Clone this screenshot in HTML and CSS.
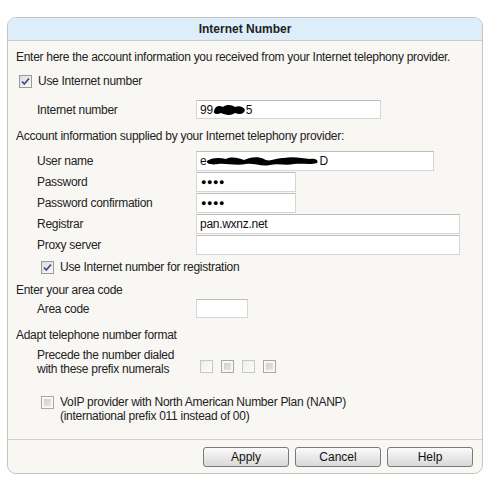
FILE: index.html
```html
<!DOCTYPE html>
<html>
<head>
<meta charset="utf-8">
<link rel="stylesheet" href="styles.css">
</head>
<body>
<div class="panel">
  <div class="head">Internet Number</div>
  <div class="content">
    <div class="line intro">Enter here the account information you received from your Internet telephony provider.</div>
    <div class="line chkrow top-chk"><span class="cb checked"><svg viewBox="0 0 13 13" width="13" height="13"><path d="M3 6.5 L5.3 9 L10 3.5" fill="none" stroke="#3c4f86" stroke-width="1.8"/></svg></span><span>Use Internet number</span></div>
    <div class="frow inet">
      <span class="lbl">Internet number</span>
      <div class="field w185"><span>99</span><svg class="blob" width="33" height="12" viewBox="0 0 33 12"><path d="M1 7 C2 2 6 1 10 3 C14 0 19 1 22 3 C26 1 31 3 32 6 C31 10 27 11 22 9 C18 12 12 11 8 9 C4 11 0 10 1 7 Z" fill="#000"/></svg><span>5</span></div>
    </div>
    <div class="line sect acct">Account information supplied by your Internet telephony provider:</div>
    <div class="fgroup">
      <div class="frow r21">
        <span class="lbl">User name</span>
        <div class="field w238"><span>e</span><svg class="blob" width="113" height="12" viewBox="0 0 113 12"><path d="M1 6 C5 3 12 2 20 4 C26 1 32 3 38 5 C44 2 52 1 58 4 C64 8 70 2 78 3 C86 1 96 3 104 4 C110 3 113 6 111 8 C104 10 96 8 88 9 C80 11 72 8 64 10 C56 12 48 8 40 9 C30 11 20 8 12 9 C6 10 0 9 1 6 Z" fill="#000"/></svg><span>D</span></div>
      </div>
      <div class="frow r21">
        <span class="lbl">Password</span>
        <div class="field w100"><span class="dots">●●●●</span></div>
      </div>
      <div class="frow r21">
        <span class="lbl">Password confirmation</span>
        <div class="field w100"><span class="dots">●●●●</span></div>
      </div>
      <div class="frow r21">
        <span class="lbl">Registrar</span>
        <div class="field w264">pan.wxnz.net</div>
      </div>
      <div class="frow r21">
        <span class="lbl">Proxy server</span>
        <div class="field w264"></div>
      </div>
    </div>
    <div class="line chkrow sub reg"><span class="cb checked"><svg viewBox="0 0 13 13" width="13" height="13"><path d="M3 6.5 L5.3 9 L10 3.5" fill="none" stroke="#3c4f86" stroke-width="1.8"/></svg></span><span>Use Internet number for registration</span></div>
    <div class="line sect area-h">Enter your area code</div>
    <div class="frow area">
      <span class="lbl">Area code</span>
      <div class="field w52"></div>
    </div>
    <div class="line sect adapt">Adapt telephone number format</div>
    <div class="frow prefix">
      <span class="lbl two">Precede the number dialed<br>with these prefix numerals</span>
      <div class="prefixes">
        <span class="cb light"></span>
        <span class="cb gray"></span>
        <span class="cb light"></span>
        <span class="cb gray"></span>
      </div>
    </div>
    <div class="chkrow sub nanp">
      <span class="cb gray big"></span>
      <span class="two">VoIP provider with North American Number Plan (NANP)<br>(international prefix 011 instead of 00)</span>
    </div>
  </div>
  <div class="foot">
    <button class="btn">Apply</button>
    <button class="btn">Cancel</button>
    <button class="btn">Help</button>
  </div>
</div>
</body>
</html>
```

FILE: styles.css
```css
html, body {
  margin: 0;
  padding: 0;
  background: #ffffff;
}
body {
  font-family: "Liberation Sans", Arial, sans-serif;
  font-size: 12px;
  color: #222;
}
.panel {
  margin: 17px 0 0 7px;
  width: 474px;
  border: 1px solid #c4c4c4;
  border-radius: 9px;
  background: #f8f7f3;
  overflow: hidden;
}
.head {
  height: 22px;
  line-height: 22px;
  background: #deedfa;
  border-bottom: 1px solid #c7ccd2;
  text-align: center;
  font-weight: bold;
  color: #222;
}
.content {
  padding: 7px 8px 0 8px;
  height: 391px;
  letter-spacing: -0.28px;
}
.line {
  height: 18px;
  line-height: 18px;
  white-space: nowrap;
}
.chkrow {
  display: flex;
  align-items: center;
  gap: 6px;
}
.top-chk {
  margin-top: 6px;
  padding-left: 3px;
}
.sub {
  padding-left: 25px;
}
.frow {
  display: flex;
  align-items: center;
}
.lbl {
  width: 159px;
  padding-left: 21px;
  flex: none;
}
.inet {
  margin-top: 10px;
  height: 19px;
}
.acct { margin-top: 8px; }
.fgroup {
  margin-top: 6px;
  display: flex;
  flex-direction: column;
  gap: 1px;
}
.r21 { height: 20px; }
.reg { margin-top: 3px; }
.area-h { margin-top: 5px; }
.area {
  height: 19px;
  margin-top: 0;
}
.adapt { margin-top: 8px; }
.prefix {
  margin-top: 4px;
  height: 28px;
  align-items: flex-end;
}
.two {
  line-height: 14px;
}
.prefixes {
  display: flex;
  gap: 8px;
  padding-left: 4px;
  padding-bottom: 3px;
}
.nanp {
  margin-top: 19px;
  align-items: flex-start;
  gap: 6px;
}
.nanp .cb { margin-top: 1px; }
.field {
  box-sizing: border-box;
  height: 19px;
  background: #fff;
  border: 1px solid #d6d6d6;
  border-top-color: #bdbdbd;
  padding-left: 3px;
  display: flex;
  align-items: center;
  color: #111;
  white-space: nowrap;
}
.r21 .field { height: 20px; }
.w185 { width: 185px; }
.w238 { width: 238px; }
.w100 { width: 100px; }
.w264 { width: 264px; }
.w52 { width: 52px; }
.blob { display: block; flex: none; }
.dots {
  font-size: 9px;
  letter-spacing: 0.6px;
  padding-left: 1px;
  color: #000;
}
.cb {
  box-sizing: border-box;
  width: 13px;
  height: 13px;
  flex: none;
  display: inline-block;
  border: 1px solid #9a9a9a;
  background: linear-gradient(135deg, #dcdcdc, #fafafa);
}
.cb svg { display: block; margin: -1px; }
.cb.light {
  border-color: #c8c8c8;
  background: linear-gradient(135deg, #ededed, #fdfdfd);
}
.cb.gray {
  border-color: #a8a8a8;
  background: linear-gradient(135deg, #c9c9c9, #ececec);
  background-clip: content-box;
  padding: 2px;
}
.foot {
  border-top: 1px solid #cfcfcf;
  padding: 7px 9px 6px 0;
  display: flex;
  justify-content: flex-end;
  gap: 6px;
}
.btn {
  width: 86px;
  height: 20px;
  box-sizing: border-box;
  font-family: "Liberation Sans", Arial, sans-serif;
  font-size: 12px;
  color: #111;
  border: 1px solid #7a7a7a;
  border-radius: 3px;
  background: linear-gradient(#fbfbfb, #e9e9e9 50%, #d9d9d9);
  padding: 0;
  margin: 0;
}
```
